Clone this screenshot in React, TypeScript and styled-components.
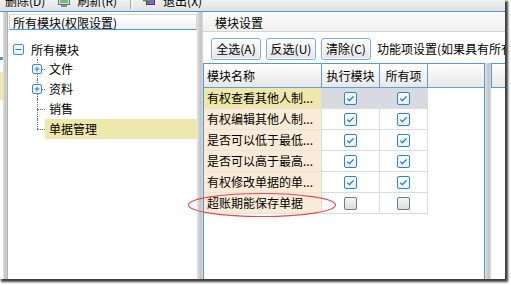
import React from 'react';
import styled, { createGlobalStyle } from 'styled-components';

const FONT = `"Noto Sans CJK SC", "Noto Sans", sans-serif`;

const GlobalStyle = createGlobalStyle`
  html, body { margin: 0; padding: 0; background: #ffffff; }
  body { font-family: ${FONT}; font-size: 12px; color: #000; }
  #root { width: 511px; height: 285px; overflow: hidden; }
`;

const Shot = styled.div`
  position: relative;
  width: 505px;
  height: 279px;
  display: flex;
  flex-direction: column;
  background: #ffffff;
  box-shadow: 2px 2px 2px 1px rgba(0, 0, 0, 0.75);
  overflow: hidden;
`;

const Toolbar = styled.div`
  flex: none;
  height: 11px;
  display: flex;
  align-items: flex-end;
  background: linear-gradient(#f0f0f0, #e1e1e1);
  border-bottom: 1px solid #4a9be2;
  overflow: hidden;
  white-space: nowrap;
`;

const ToolButton = styled.div<{ $pl: number }>`
  flex: none;
  display: flex;
  align-items: center;
  gap: 7px;
  height: 20px;
  line-height: 20px;
  padding-left: ${(p) => p.$pl}px;
`;

const ToolSep = styled.div`
  flex: none;
  align-self: stretch;
  width: 1px;
  margin: 0 0 2px 13px;
  border-left: 1px solid #a9a9a9;
  border-right: 1px solid #ffffff;
`;

const Main = styled.div`
  flex: 1;
  min-height: 0;
  display: flex;
`;

const EdgeStrip = styled.div`
  flex: none;
  width: 3px;
  background: #ffffff;
  display: flex;
  flex-direction: column;
`;

const EdgeMark = styled.div<{ $top: number; $h: number; $c: string }>`
  margin-top: ${(p) => p.$top}px;
  height: ${(p) => p.$h}px;
  background: ${(p) => p.$c};
`;

const Splitter = styled.div<{ $w: number }>`
  flex: none;
  width: ${(p) => p.$w}px;
  background: linear-gradient(to right, #e6e6e6, #cfcfcf 35%, #c3c3c3 65%, #dcdcdc);
`;

const LeftPanel = styled.div`
  flex: none;
  width: 190px;
  box-sizing: border-box;
  display: flex;
  flex-direction: column;
  background: #ffffff;
  border-left: 1px solid #b0b0b0;
  padding: 2px 0 0 1px;
`;

const PanelHeader = styled.div`
  flex: none;
  height: 16px;
  box-sizing: border-box;
  border: 1px solid #d2d2d2;
  border-bottom: 1px solid #4a9be2;
  background: linear-gradient(#ffffff, #f0f0f0);
  padding-left: 3px;
  line-height: 16px;
  white-space: nowrap;
`;

const Tree = styled.div`
  display: flex;
  flex-direction: column;
  padding-top: 9px;
`;

const TreeRow = styled.div`
  height: 20px;
  display: flex;
  align-items: center;
  white-space: nowrap;
`;

const RootRow = styled(TreeRow)`
  padding-left: 4px;
  gap: 7px;
`;

const Connector = styled.span<{ $last?: boolean }>`
  position: relative;
  flex: none;
  align-self: stretch;
  width: 8px;
  margin-left: 28px;
  &::before {
    content: '';
    position: absolute;
    left: 0;
    top: 0;
    height: ${(p) => (p.$last ? '10px' : '20px')};
    border-left: 1px dotted #6e6e6e;
  }
  &::after {
    content: '';
    position: absolute;
    left: 0;
    right: 0;
    top: 10px;
    border-top: 1px dotted #6e6e6e;
  }
`;

const ExpanderSlot = styled.span`
  position: absolute;
  left: -5px;
  top: 5px;
  width: 10px;
  height: 10px;
  z-index: 1;
  display: flex;
`;

const NodeLabel = styled.span<{ $selected?: boolean }>`
  flex: 1;
  height: 20px;
  line-height: 20px;
  padding-left: 4px;
  background: ${(p) => (p.$selected ? '#eee8aa' : 'transparent')};
`;

const RightPanel = styled.div`
  flex: 1;
  min-width: 0;
  display: flex;
  flex-direction: column;
  background: #ffffff;
  overflow: hidden;
  padding-top: 1px;
`;

const RightHeader = styled.div`
  flex: none;
  height: 19px;
  box-sizing: border-box;
  padding-left: 12px;
  line-height: 19px;
  background: linear-gradient(#fbfbfb, #f1f1f1);
  border-bottom: 1px solid #d4d4d4;
  white-space: nowrap;
`;

const ButtonBar = styled.div`
  flex: none;
  display: flex;
  align-items: center;
  gap: 5px;
  padding: 6px 0 0 8px;
  white-space: nowrap;
`;

const ActionButton = styled.button`
  flex: none;
  width: 50px;
  height: 22px;
  box-sizing: border-box;
  padding: 0;
  border: 1px solid #78acd9;
  border-radius: 3px;
  background: linear-gradient(#fefefe, #e3e3e3);
  box-shadow: inset 0 0 0 1px rgba(255, 255, 255, 0.8);
  font-family: ${FONT};
  font-size: 12px;
  line-height: 20px;
  color: #000;
`;

const Hint = styled.span`
  flex: none;
  margin-left: 1px;
  line-height: 22px;
`;

const GridArea = styled.div`
  flex: 1;
  min-height: 0;
  display: flex;
  margin-top: 3px;
`;

const GridBox = styled.div`
  flex: none;
  width: 282px;
  box-sizing: border-box;
  border: 1px solid #4f9ad9;
  border-bottom: none;
  display: flex;
  flex-direction: column;
  background: #ffffff;
`;

const HeaderRow = styled.div`
  flex: none;
  height: 24px;
  display: flex;
`;

const HeaderCell = styled.div<{ $w?: number; $center?: boolean; $last?: boolean }>`
  ${(p) => (p.$w ? `width: ${p.$w}px; flex: none;` : 'flex: 1;')}
  box-sizing: border-box;
  border-right: ${(p) => (p.$last ? 'none' : '1px solid #5aa0dc')};
  border-bottom: 1px solid #5aa0dc;
  background: linear-gradient(#ffffff, #e7e7e7);
  line-height: 23px;
  padding-left: ${(p) => (p.$center ? 0 : 3)}px;
  text-align: ${(p) => (p.$center ? 'center' : 'left')};
  white-space: nowrap;
`;

const DataRow = styled.div`
  flex: none;
  height: 21px;
  display: flex;
`;

const NameCell = styled.div<{ $bg: string }>`
  flex: none;
  width: 118px;
  box-sizing: border-box;
  border-right: 1px solid #dcdcdc;
  border-bottom: 1px solid #e4e4e4;
  padding-left: 3px;
  line-height: 20px;
  background: ${(p) => p.$bg};
  white-space: nowrap;
  overflow: hidden;
`;

const CheckCell = styled.div<{ $w: number; $bg: string }>`
  flex: none;
  width: ${(p) => p.$w}px;
  box-sizing: border-box;
  display: flex;
  align-items: center;
  justify-content: center;
  border-right: 1px solid #dcdcdc;
  border-bottom: 1px solid #dcdcdc;
  background: ${(p) => p.$bg};
`;

const SecondBox = styled.div`
  flex: 1;
  display: flex;
  flex-direction: column;
  background: #ffffff;
`;

const SecondHeader = styled.div`
  flex: none;
  height: 25px;
  box-sizing: border-box;
  border: 1px solid #4f9ad9;
  border-right: none;
  background: linear-gradient(#ffffff, #e7e7e7);
`;

const Annotation = styled.svg`
  position: absolute;
  left: 187px;
  top: 192px;
  pointer-events: none;
  overflow: visible;
`;

const Expander = ({ open, size }: { open?: boolean; size: number }) => {
  const c = (size - 1) / 2;
  return (
    <svg width={size} height={size} viewBox={`0 0 ${size} ${size}`}>
      <defs>
        <linearGradient id={`eg${size}`} x1="0" y1="0" x2="0" y2="1">
          <stop offset="0" stopColor="#ffffff" />
          <stop offset="1" stopColor="#e8f1fa" />
        </linearGradient>
      </defs>
      <rect x="0.5" y="0.5" width={size - 1} height={size - 1} rx="1.5" fill={`url(#eg${size})`} stroke="#3a8bd2" />
      <path d={`M2.5 ${c + 0.5}h${size - 5}`} stroke="#2a7cc4" />
      {!open && <path d={`M${c + 0.5} 2.5v${size - 5}`} stroke="#2a7cc4" />}
    </svg>
  );
};

const CheckBox = ({ checked }: { checked: boolean }) => (
  <svg width="13" height="13" viewBox="0 0 13 13">
    <defs>
      <linearGradient id="cbOn" x1="0" y1="0" x2="0" y2="1">
        <stop offset="0" stopColor="#ffffff" />
        <stop offset="1" stopColor="#e4eef7" />
      </linearGradient>
      <linearGradient id="cbOff" x1="0" y1="0" x2="0" y2="1">
        <stop offset="0" stopColor="#f6f6f6" />
        <stop offset="1" stopColor="#dcdcdc" />
      </linearGradient>
    </defs>
    <rect
      x="0.5"
      y="0.5"
      width="12"
      height="12"
      rx="1.5"
      fill={checked ? 'url(#cbOn)' : 'url(#cbOff)'}
      stroke={checked ? '#2786cf' : '#6f7b87'}
    />
    {checked && <polyline points="3.3,6.6 5.4,8.7 9.6,4.3" fill="none" stroke="#1f6fb6" strokeWidth="1.2" />}
  </svg>
);

const RefreshIcon = () => (
  <svg width="12" height="14" viewBox="0 0 12 14">
    <rect x="0.5" y="1.5" width="11" height="9" fill="#cfdbe8" stroke="#5a7896" />
    <rect x="2" y="3" width="8" height="6" fill="#7fbf6a" />
    <rect x="3" y="11" width="6" height="2" fill="#7890a8" />
  </svg>
);

const ExitIcon = () => (
  <svg width="13" height="14" viewBox="0 0 13 14">
    <rect x="3.5" y="0.5" width="8" height="10" fill="#8a64c4" stroke="#553388" />
    <path d="M0 5h5V3l3 3-3 3V7H0z" fill="#4caf3c" stroke="#2d7a22" strokeWidth="0.6" />
  </svg>
);

type Row = { name: string; exec: boolean; all: boolean; focused?: boolean };

const rows: Row[] = [
  { name: '有权查看其他人制...', exec: true, all: true, focused: true },
  { name: '有权编辑其他人制...', exec: true, all: true },
  { name: '是否可以低于最低...', exec: true, all: true },
  { name: '是否可以高于最高...', exec: true, all: true },
  { name: '有权修改单据的单...', exec: true, all: true },
  { name: '超账期能保存单据', exec: false, all: false },
];

type Node = { label: string; expandable?: boolean; selected?: boolean };

const children: Node[] = [
  { label: '文件', expandable: true },
  { label: '资料', expandable: true },
  { label: '销售' },
  { label: '单据管理', selected: true },
];

export default function App() {
  return (
    <>
      <GlobalStyle />
      <Shot>
        <Toolbar>
          <ToolButton $pl={5}>
            <span>删除(D)</span>
          </ToolButton>
          <ToolButton $pl={13}>
            <RefreshIcon />
            <span>刷新(R)</span>
          </ToolButton>
          <ToolSep />
          <ToolButton $pl={10}>
            <ExitIcon />
            <span>退出(X)</span>
          </ToolButton>
        </Toolbar>
        <Main>
          <EdgeStrip>
            <EdgeMark $top={45} $h={3} $c="#4a9be2" />
            <EdgeMark $top={12} $h={28} $c="#eee8aa" />
          </EdgeStrip>
          <Splitter $w={4} />
          <LeftPanel>
            <PanelHeader>所有模块(权限设置)</PanelHeader>
            <Tree>
              <RootRow>
                <Expander open size={11} />
                <span>所有模块</span>
              </RootRow>
              {children.map((n, i) => (
                <TreeRow key={n.label}>
                  <Connector $last={i === children.length - 1}>
                    {n.expandable && (
                      <ExpanderSlot>
                        <Expander size={10} />
                      </ExpanderSlot>
                    )}
                  </Connector>
                  <NodeLabel $selected={n.selected}>{n.label}</NodeLabel>
                </TreeRow>
              ))}
            </Tree>
          </LeftPanel>
          <Splitter $w={6} />
          <RightPanel>
            <RightHeader>模块设置</RightHeader>
            <ButtonBar>
              <ActionButton>全选(A)</ActionButton>
              <ActionButton>反选(U)</ActionButton>
              <ActionButton>清除(C)</ActionButton>
              <Hint>功能项设置(如果具有所有项权限则不需单独设置)</Hint>
            </ButtonBar>
            <GridArea>
              <GridBox>
                <HeaderRow>
                  <HeaderCell $w={118}>模块名称</HeaderCell>
                  <HeaderCell $w={58} $center>
                    执行模块
                  </HeaderCell>
                  <HeaderCell $w={48} $center>
                    所有项
                  </HeaderCell>
                  <HeaderCell $last />
                </HeaderRow>
                {rows.map((r) => (
                  <DataRow key={r.name}>
                    <NameCell $bg={r.focused ? '#eee8aa' : '#faebd7'}>{r.name}</NameCell>
                    <CheckCell $w={58} $bg={r.focused ? '#d9d9e1' : '#ffffff'}>
                      <CheckBox checked={r.exec} />
                    </CheckCell>
                    <CheckCell $w={48} $bg={r.focused ? '#d9d9e1' : '#ffffff'}>
                      <CheckBox checked={r.all} />
                    </CheckCell>
                  </DataRow>
                ))}
              </GridBox>
              <Splitter $w={6} />
              <SecondBox>
                <SecondHeader />
              </SecondBox>
            </GridArea>
          </RightPanel>
        </Main>
        <Annotation width="150" height="26" viewBox="0 0 150 26">
          <ellipse cx="75" cy="13" rx="73.5" ry="11.5" fill="none" stroke="#e8474c" strokeWidth="1.1" />
        </Annotation>
      </Shot>
    </>
  );
}
